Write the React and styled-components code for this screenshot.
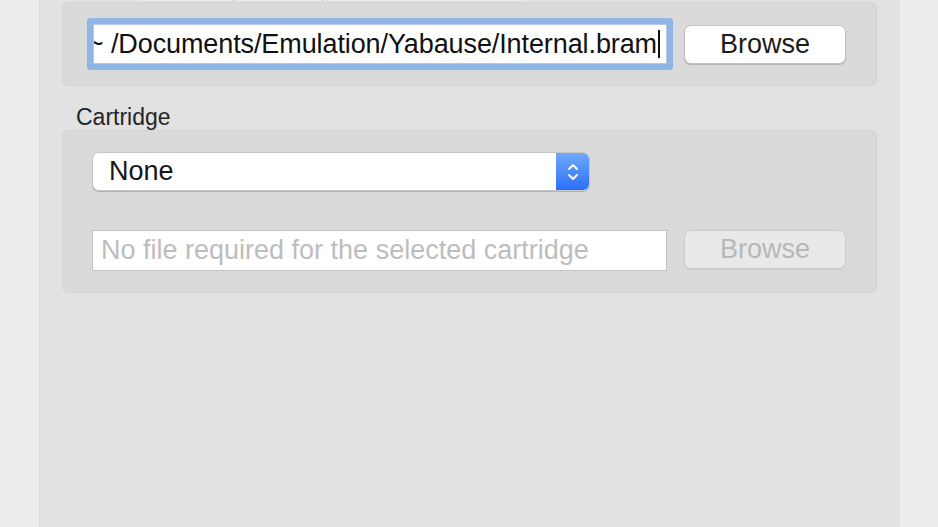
import React from 'react'
import styled, { createGlobalStyle } from 'styled-components'

const GlobalStyle = createGlobalStyle`
  html, body {
    margin: 0;
    padding: 0;
    background: #ececec;
    font-family: "Liberation Sans", Arial, sans-serif;
  }
`

function Stepper() {
    return (
        <svg width="14" height="22" viewBox="0 0 14 22">
            <path d="M3 8 L7 4 L11 8" fill="none" stroke="#fff" strokeWidth="1.8" strokeLinecap="round" strokeLinejoin="round" />
            <path d="M3 14 L7 18 L11 14" fill="none" stroke="#fff" strokeWidth="1.8" strokeLinecap="round" strokeLinejoin="round" />
        </svg>
    )
}

function App() {
    return (
        <Page>
            <GlobalStyle />
            <Panel>
                <TabStrip>
                    <TabSegment w={93} />
                    <TabSegment w={88} divided />
                    <TabSegment w={200} divided />
                </TabStrip>
                <Group>
                    <Row>
                        <FocusField>
                            <FieldText>~ /Documents/Emulation/Yabause/Internal.bram</FieldText>
                            <Caret />
                        </FocusField>
                        <Button>Browse</Button>
                    </Row>
                </Group>

                <GroupLabel>Cartridge</GroupLabel>
                <Group>
                    <Popup>
                        <PopupText>None</PopupText>
                        <PopupArrows>
                            <Stepper />
                        </PopupArrows>
                    </Popup>
                    <Row spaced>
                        <Field>
                            <Placeholder>No file required for the selected cartridge</Placeholder>
                        </Field>
                        <Button disabled>Browse</Button>
                    </Row>
                </Group>
            </Panel>
        </Page>
    )
}

export default App

const Page = styled.div`
width: 938px;
height: 527px;
overflow: hidden;
background: #ececec;
display: flex;
`

const Panel = styled.div`
margin-left: 39px;
width: 861px;
height: 527px;
box-sizing: border-box;
background: #e2e2e2;
border-left: 1px solid #dcdcdc;
display: flex;
flex-direction: column;
padding: 0 23px 0 22px;
`

const TabStrip = styled.div`
height: 2px;
display: flex;
margin-left: 78px;
`

const TabSegment = styled.div`
width: ${p => p.w}px;
height: 2px;
background: #e6e6e6;
border-left: ${p => (p.divided ? '1px solid #c9c9c9' : 'none')};
`

const Group = styled.div`
background: #dadada;
border: 1px solid #d2d2d2;
border-radius: 7px;
box-sizing: border-box;
padding: 21px 30px 21px 29px;
display: flex;
flex-direction: column;
`

const GroupLabel = styled.div`
margin: 18px 0 0 14px;
height: 26px;
line-height: 26px;
font-size: 23px;
color: #262626;
`

const Row = styled.div`
display: flex;
align-items: flex-start;
gap: 17px;
margin-top: ${p => (p.spaced ? '39px' : '0')};
`

const FocusField = styled.div`
width: 574px;
height: 40px;
margin-left: 1px;
box-sizing: border-box;
background: #fff;
border: 1px solid #b7c9e0;
border-radius: 1px;
box-shadow: 0 0 0 6px #8fb5e7;
display: flex;
align-items: center;
justify-content: flex-end;
overflow: hidden;
padding-right: 6px;
`

const FieldText = styled.span`
flex-shrink: 0;
font-size: 27px;
letter-spacing: -0.1px;
color: #111;
white-space: nowrap;
`

const Caret = styled.span`
flex-shrink: 0;
display: inline-block;
width: 2px;
height: 28px;
background: #111;
margin-left: 1px;
`

const Field = styled.div`
width: 575px;
height: 41px;
box-sizing: border-box;
background: #fff;
border: 1px solid #c4c4c4;
display: flex;
align-items: center;
padding-left: 8px;
overflow: hidden;
`

const Placeholder = styled.span`
font-size: 27px;
color: #bdbdbd;
white-space: nowrap;
`

const Button = styled.div`
width: 162px;
height: 39px;
box-sizing: border-box;
border-radius: 7px;
background: ${p => (p.disabled ? '#e9e9e9' : '#ffffff')};
border: 1px solid ${p => (p.disabled ? '#cdcdcd' : '#c2c2c2')};
box-shadow: ${p => (p.disabled ? '0 1px 1px rgba(0,0,0,0.06)' : '0 1px 1px rgba(0,0,0,0.18)')};
display: flex;
align-items: center;
justify-content: center;
font-size: 27px;
color: ${p => (p.disabled ? '#b8b8b8' : '#1c1c1c')};
margin-top: ${p => (p.disabled ? '0' : '1px')};
`

const Popup = styled.div`
width: 498px;
height: 39px;
box-sizing: border-box;
background: #fff;
border-radius: 7px;
border: 1px solid #c6c6c6;
box-shadow: 0 1px 1px rgba(0,0,0,0.2);
display: flex;
align-items: stretch;
overflow: hidden;
`

const PopupText = styled.div`
flex: 1;
display: flex;
align-items: center;
padding-left: 16px;
font-size: 27px;
color: #161616;
`

const PopupArrows = styled.div`
width: 33px;
background: linear-gradient(#6ea9fb, #2c6ff7);
display: flex;
align-items: center;
justify-content: center;
`
